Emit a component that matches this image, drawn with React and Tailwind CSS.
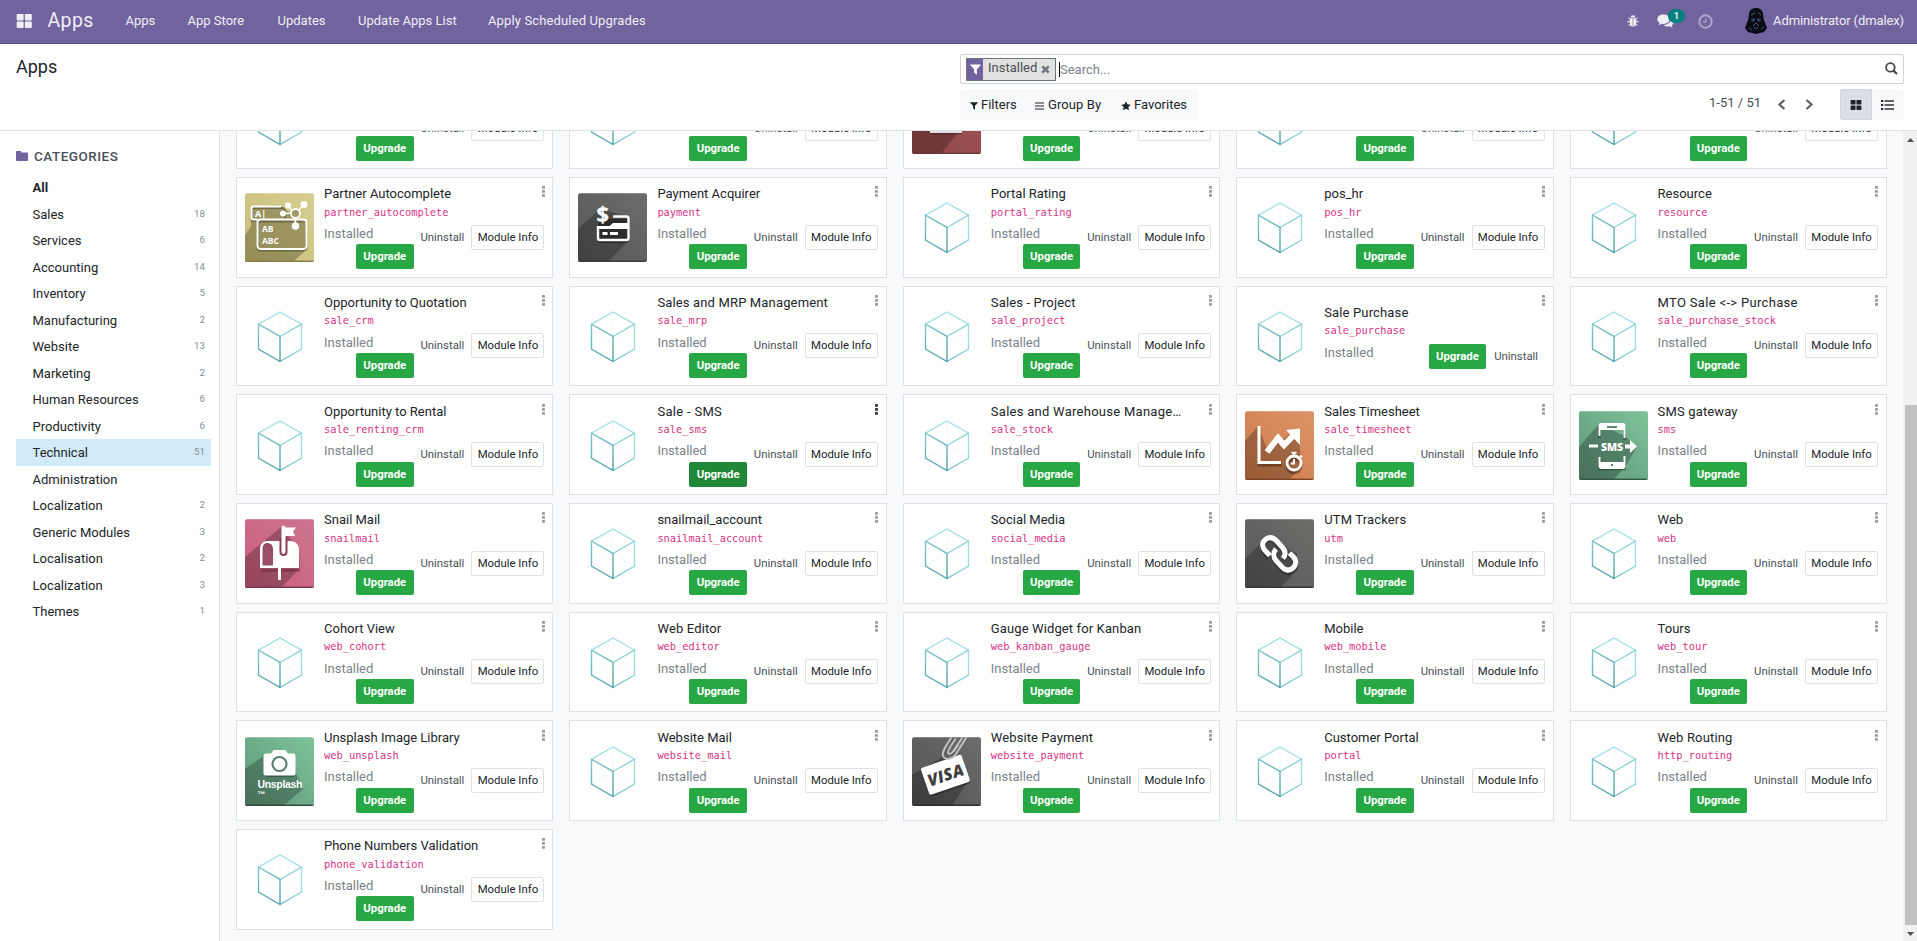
import React from "react";

const MODULES = [
  ["", ""],
  ["", ""],
  ["", "", "red"],
  ["", ""],
  ["", ""],
  ["Partner Autocomplete", "partner_autocomplete", "partner"],
  ["Payment Acquirer", "payment", "payment"],
  ["Portal Rating", "portal_rating"],
  ["pos_hr", "pos_hr"],
  ["Resource", "resource"],
  ["Opportunity to Quotation", "sale_crm"],
  ["Sales and MRP Management", "sale_mrp", "cube", "", "tracking-[0.15px]"],
  ["Sales - Project", "sale_project", "cube", "", "tracking-[0.15px]"],
  ["Sale Purchase", "sale_purchase", "cube", "compact", "tracking-[0.15px]"],
  ["MTO Sale <-> Purchase", "sale_purchase_stock", "cube", "", "tracking-[0.32px]"],
  ["Opportunity to Rental", "sale_renting_crm"],
  ["Sale - SMS", "sale_sms", "cube", "hovered", "tracking-[0.3px]"],
  ["Sales and Warehouse Manage…", "sale_stock", "cube", "", "tracking-[0.27px]"],
  ["Sales Timesheet", "sale_timesheet", "timesheet"],
  ["SMS gateway", "sms", "sms", "", "tracking-[0.15px]"],
  ["Snail Mail", "snailmail", "mail"],
  ["snailmail_account", "snailmail_account"],
  ["Social Media", "social_media"],
  ["UTM Trackers", "utm", "link", "", "tracking-[0.15px]"],
  ["Web", "web"],
  ["Cohort View", "web_cohort"],
  ["Web Editor", "web_editor", "cube", "", "tracking-[0.15px]"],
  ["Gauge Widget for Kanban", "web_kanban_gauge", "cube", "", "tracking-[0.12px]"],
  ["Mobile", "web_mobile"],
  ["Tours", "web_tour"],
  ["Unsplash Image Library", "web_unsplash", "unsplash"],
  ["Website Mail", "website_mail"],
  ["Website Payment", "website_payment", "visa", "", "tracking-[0.1px]"],
  ["Customer Portal", "portal"],
  ["Web Routing", "http_routing", "cube", "", "tracking-[0.15px]"],
  ["Phone Numbers Validation", "phone_validation"],
];

const CATEGORIES = [
  ["All", ""],
  ["Sales", "18"],
  ["Services", "6"],
  ["Accounting", "14"],
  ["Inventory", "5"],
  ["Manufacturing", "2"],
  ["Website", "13"],
  ["Marketing", "2"],
  ["Human Resources", "6"],
  ["Productivity", "6"],
  ["Technical", "51"],
  ["Administration", ""],
  ["Localization", "2"],
  ["Generic Modules", "3"],
  ["Localisation", "2"],
  ["Localization", "3"],
  ["Themes", "1"],
];

function Cube() {
  return (
    <svg className="size-[69px] shrink-0" viewBox="0 0 69 69" fill="none" strokeLinecap="round">
      <defs>
        <linearGradient id="cubeL" gradientUnits="userSpaceOnUse" x1="13" y1="20" x2="35" y2="60">
          <stop offset="0" stopColor="#84c9cc" />
          <stop offset="1" stopColor="#4b9fa4" />
        </linearGradient>
        <linearGradient id="cubeR" gradientUnits="userSpaceOnUse" x1="35" y1="60" x2="57" y2="12">
          <stop offset="0" stopColor="#6dbcc0" />
          <stop offset="0.5" stopColor="#a3e0e2" />
          <stop offset="1" stopColor="#a3e0e2" />
        </linearGradient>
      </defs>
      <path d="M35 10V34.5M13.5 47L35 34.5L56.5 47" stroke="#eef6f7" strokeWidth="0.8" />
      <path d="M35 59.5L56.5 47V22.2L35 10L13.5 22.2" stroke="url(#cubeR)" strokeWidth="1.4" />
      <path d="M35 34.5L56.5 22.2" stroke="#8fd3d6" strokeWidth="1.4" />
      <path d="M13.5 22.2V47L35 59.5M13.5 22.2L35 34.5V59.5" stroke="url(#cubeL)" strokeWidth="1.4" />
    </svg>
  );
}

function Tile({ id, from, to, edge, shadow, shade = "#000", children }) {
  return (
    <svg className="size-[69px] shrink-0" viewBox="0 0 69 69" fill="none">
      <defs>
        <linearGradient id={id} x1="0" y1="1" x2="1" y2="0">
          <stop offset="0" stopColor={from} />
          <stop offset="1" stopColor={to} />
        </linearGradient>
        <clipPath id={id + "c"}>
          <rect width="69" height="69" rx="2.5" />
        </clipPath>
      </defs>
      <g clipPath={`url(#${id}c)`}>
        <rect width="69" height="69" fill={`url(#${id})`} />
        <path d={shadow} fill={shade} opacity="0.25" />
        <rect width="69" height="1" fill="#fff" opacity="0.22" />
        <rect y="67.6" width="69" height="1.4" fill={edge} />
        {children}
      </g>
    </svg>
  );
}

function ModuleIcon({ kind }) {
  switch (kind) {
    case "red":
      return (
        <Tile id="red" from="#92494b" to="#a05254" edge="#6e3336" shadow="M0 40H52L29 69H0Z">
          <path d="M18 48.300H50" stroke="#3d2022" strokeWidth="2" opacity="0.6" />
          <path d="M18 47H50" stroke="#e4e2e0" strokeWidth="2" />
        </Tile>
      );
    case "partner":
      return (
        <Tile id="pa" from="#c9bd72" to="#d6cd93" edge="#857c46" shadow="M0 42L6 33V14L34 12L60 30L62 56L48 69H0Z">
          <g opacity="0.45" stroke="#3c381e" strokeWidth="2" transform="translate(0 1.6)">
            <rect x="6.500" y="13.500" width="33" height="13" rx="2" />
            <rect x="12.500" y="27" width="49" height="29" rx="3" />
          </g>
          <path d="M36 13.500H8.500A2 2 0 0 0 6.500 15.500V24.500A2 2 0 0 0 8.500 26.500H12.500M40 26.500H58.500A3 3 0 0 1 61.500 29.500V53A3 3 0 0 1 58.500 56H15.500A3 3 0 0 1 12.500 53V29.500A3 3 0 0 1 15.500 26.500H46" stroke="#fff" strokeWidth="2" />
          <path d="M50 20L43 13M50 20L59 12M50 20L38 20.500M50 20L50.500 32" stroke="#fff" strokeWidth="1.600" />
          <circle cx="50.500" cy="20.500" r="4.500" fill="#a39a60" stroke="#fff" strokeWidth="1.800" />
          <g fill="#fff">
            <circle cx="43" cy="12.500" r="3" />
            <circle cx="59" cy="11.500" r="3.500" />
            <circle cx="38" cy="20.500" r="3" />
            <circle cx="50.500" cy="33" r="3.800" />
          </g>
          <g fill="#fff" fontFamily="'Open Sans',sans-serif" fontWeight="700" fontSize="8.500">
            <text x="10" y="23.500" fontSize="9">A|</text>
            <text x="17" y="39">AB</text>
            <text x="17" y="51">ABC</text>
          </g>
        </Tile>
      );
    case "payment":
      return (
        <Tile id="py" from="#565655" to="#6c6e6b" edge="#3a3a3a" shadow="M0 36L22 16L52 24V46L30 69H0Z">
          <g opacity="0.4" transform="translate(0 2)">
            <rect x="20" y="24" width="31" height="24" rx="3" fill="#000" />
          </g>
          <text x="18.500" y="28.500" fill="#fff" stroke="#fff" strokeWidth="0.400" fontFamily="'Open Sans',sans-serif" fontWeight="700" fontSize="21.500">$</text>
          <path d="M35 23.500H48.500A2 2 0 0 1 50.500 25.500V45A2 2 0 0 1 48.500 47H22A2 2 0 0 1 20 45V33" stroke="#fff" strokeWidth="2.400" />
          <path d="M20 34.500H50V30H35L31 33.500L20 35Z" fill="#fff" />
          <path d="M20 34.500H50M24.500 40.500H29.500M32 40.500H40" stroke="#fff" strokeWidth="3.200" />
        </Tile>
      );
    case "timesheet":
      return (
        <Tile id="ts" from="#cd7a48" to="#dc9468" edge="#7c4527" shadow="M0 30L13 15L22 38L54 18L56 56L44 69H0Z">
          <g opacity="0.4" transform="translate(0 2)" stroke="#2c1608">
            <path d="M14 16V52H37" strokeWidth="3" />
            <circle cx="49" cy="53" r="7" strokeWidth="3" />
          </g>
          <path d="M14 15V51.500H36" stroke="#fff" strokeWidth="3.200" />
          <path d="M22 41L33 27L39 34L50 23" stroke="#fff" strokeWidth="6" strokeLinejoin="miter" />
          <path d="M41 19L55 17.500V34Z" fill="#fff" />
          <circle cx="49" cy="52" r="7" stroke="#fff" strokeWidth="2.800" />
          <path d="M49 48V52.500H46M46.500 41.800H51.500M49 42V45M55 44.500L57 46.500" stroke="#fff" strokeWidth="2" />
        </Tile>
      );
    case "sms":
      return (
        <Tile id="sm" from="#5f9678" to="#7dc39b" edge="#34553f" shadow="M0 36L20 13L46 25L58 36L46 56L34 69H0Z">
          <g opacity="0.4" transform="translate(0 2)" stroke="#10291b" strokeWidth="3">
            <path d="M20.500 25V15H45.500V27M20.500 46V56H45.500V46" />
          </g>
          <path d="M20.500 25V15A2 2 0 0 1 22.500 13H43.500A2 2 0 0 1 45.500 15V27M20.500 46V55A2 2 0 0 0 22.500 57H43.500A2 2 0 0 0 45.500 55V45" stroke="#fff" strokeWidth="2" />
          <path d="M20 13H46V19H20ZM20 51H46V57H20Z" fill="#fff" />
          <path d="M28 16H38M32 54H34" stroke="#5d8870" strokeWidth="1.800" />
          <path d="M10 35H19" stroke="#fff" strokeWidth="3" />
          <path d="M46 33.500H51V29L58 35.500L51 42V37.500H46Z" fill="#fff" />
          <text x="33" y="39.500" textAnchor="middle" fill="#fff" fontFamily="'Open Sans',sans-serif" fontWeight="800" fontSize="10.500" textLength="22">SMS</text>
        </Tile>
      );
    case "mail":
      return (
        <Tile id="ml" from="#cb5d7c" to="#cc7590" edge="#7d3149" shadow="M0 38L36 8L54 30L55 49L36 69H0Z">
          <path d="M16 51.500H55M38 8V36" stroke="#5c1930" strokeWidth="2" opacity="0.5" />
          <path d="M22 22H45C51 22 54 26 54 31V49H15V30C15 25 18 22 22 22Z" fill="#fff" />
          <path d="M17.500 46.500V30C17.500 26 19.500 24 22 24C25.500 24 28 26 28 30V46.500Z" fill="#9c4d69" />
          <path d="M34.500 49V61" stroke="#fff" strokeWidth="3" />
          <path d="M38.500 22V33" stroke="#8d3d59" strokeWidth="8" strokeLinecap="round" />
          <path d="M38.500 8.500V33" stroke="#fff" strokeWidth="4" strokeLinecap="round" />
          <path d="M38 8.500H51L48 12.500L50 17H38Z" fill="#fff" />
        </Tile>
      );
    case "link":
      return (
        <Tile id="lk" from="#5a5a5a" to="#6b6d68" edge="#333" shadow="M0 40L20 20L52 34L53 50L35 69H0Z">
          <g strokeWidth="5" strokeLinecap="butt" fill="none">
            <g stroke="#222" opacity="0.45" transform="translate(0 2)">
              <path d="M24 37L20 32.500C16.500 28 17 23.500 20.500 20.800C24 18 28 18.500 31.500 22L38 29C41 32.500 41 36.500 38.500 39" />
              <path d="M44.500 34.500L48.500 38.500C52 42.500 51 46.500 48 49.500C44.500 52.500 40.500 52 37 48.500L31 41.500C28 38 28 33.500 31 30.500" />
            </g>
            <g stroke="#fff">
              <path d="M25 36.500L20 31.500C16.500 27.500 17 23 20.500 20.500C24 17.800 28 18.200 31.500 21.800L37.500 28.500C40.500 32 40.800 36 38 39.500" />
              <path d="M44.500 34L48.500 38C52 42 51 46.500 48 49C44.500 52 40.500 51.500 37 48L31 41.500C28 38 28 33.500 31 30" />
            </g>
          </g>
        </Tile>
      );
    case "unsplash":
      return (
        <Tile id="un" from="#5f9678" to="#7dc39b" edge="#2d4a39" shadow="M0 32L20 18L51 36L58 52L38 69H0Z">
          <path d="M21 39H49" stroke="#24392d" strokeWidth="2" opacity="0.5" />
          <path d="M20.500 16.500H26L28.500 13H40.500L43 16.500H48A2.500 2.500 0 0 1 50.500 19V36A2.500 2.500 0 0 1 48 38.500H21A2.500 2.500 0 0 1 18.500 36V19A2.500 2.500 0 0 1 20.500 16.500Z" fill="#fff" />
          <circle cx="34.500" cy="27" r="7" stroke="#5d8270" strokeWidth="2.200" />
          <g fill="#fff" fontFamily="'Liberation Sans',sans-serif" fontWeight="700">
            <text x="12.500" y="51" fontSize="10.500" textLength="45">Unsplash</text>
            <text x="12.500" y="60" fontSize="8">™</text>
          </g>
        </Tile>
      );
    case "visa":
      return (
        <Tile id="vi" from="#515151" to="#6c6e6b" edge="#2b2b2b" shadow="M0 38L30 20L56 44L40 69H0Z">
          <g transform="translate(33.500 38) rotate(-19)">
            <rect x="-21.500" y="-12.500" width="43" height="28.500" rx="2" fill="#222" opacity="0.5" />
            <rect x="-21.500" y="-14.500" width="43" height="28.500" rx="2" fill="#fff" />
            <text x="0" y="6" textAnchor="middle" fontFamily="'Open Sans',sans-serif" fontStyle="italic" fontWeight="800" fontSize="16.500" textLength="37" fill="#3f3f3f">VISA</text>
          </g>
          <path d="M54 1L44 17C41 22 33 24 31 19C29.500 15 34 9 39 1M50 1L42 13C40 17 36.500 18 36 15.500C36 13 40 7 43.500 2M46 8L42 14" stroke="#c4c4c4" strokeWidth="1.800" strokeLinecap="round" />
        </Tile>
      );
    default:
      return <Cube />;
  }
}

function Upgrade({ dark }) {
  return (
    <button
      className={
        "h-[25px] w-[57.500px] shrink-0 rounded-[2px] text-[11.375px] font-bold text-white " +
        (dark ? "bg-[#1f8838]" : "bg-[#28a745]")
      }
    >
      Upgrade
    </button>
  );
}

function ModuleCard({ title, name, icon, variant, tracking = "" }) {
  const compact = variant === "compact";
  return (
    <article className="flex overflow-hidden border border-[#dee2e6] bg-white pl-2">
      <div className="flex items-start pt-[15.400px]">
        <ModuleIcon kind={icon} />
      </div>
      <div className={"ml-2.5 flex min-w-0 flex-1 flex-col " + (compact ? "pt-[16px]" : "pt-[6px]")}>
        <div className="flex h-5 items-center text-[13px] text-[#212529]">
          <span className={"whitespace-nowrap " + tracking}>{title}</span>
        </div>
        <div className="flex h-4 items-center pt-px font-['DejaVu_Sans_Mono',monospace] text-[10.350px] text-[#d63384]">
          <span className="whitespace-nowrap">{name}</span>
        </div>
        {compact ? (
          <div className="mt-1 flex">
            <span className="h-[20px] flex-1 text-[13px] leading-[20px] text-[#7c838a]">Installed</span>
            <div className="mt-px mr-[14.500px] flex items-center gap-2 self-start">
              <Upgrade />
              <span className="text-[11.375px] text-[#495057]">Uninstall</span>
            </div>
          </div>
        ) : (
          <div className="mt-1 flex">
            <div className="flex flex-col">
              <span className="h-[20.300px] text-[13px] leading-[19px] text-[#7c838a]">Installed</span>
              <div className="ml-8 flex">
                <Upgrade dark={variant === "hovered"} />
              </div>
            </div>
            <div className="mt-[0.600px] mr-2 ml-auto flex h-[25px] items-center gap-[7px]">
              <span className="text-[11.375px] text-[#495057]">Uninstall</span>
              <button className="h-[25px] w-[73px] rounded-[2px] border border-[#dee2e6] text-[11.375px] whitespace-nowrap text-[#212529]">
                Module Info
              </button>
            </div>
          </div>
        )}
      </div>
      <div className="relative w-0">
        <svg className="absolute top-[8.300px] right-[7.500px] h-[11px] w-[3px]" viewBox="0 0 3 11" fill={variant === "hovered" ? "#343a40" : "#9a9ea3"}>
          <rect width="3" height="2.700" rx="0.500" />
          <rect y="4" width="3" height="2.700" rx="0.500" />
          <rect y="8" width="3" height="2.700" rx="0.500" />
        </svg>
      </div>
    </article>
  );
}

function GridIcon({ className }) {
  return (
    <svg className={className} viewBox="0 0 13 12" fill="currentColor">
      <rect width="6" height="5.500" rx="0.800" />
      <rect x="7" width="6" height="5.500" rx="0.800" />
      <rect y="6.500" width="6" height="5.500" rx="0.800" />
      <rect x="7" y="6.500" width="6" height="5.500" rx="0.800" />
    </svg>
  );
}

function FunnelIcon({ className }) {
  return (
    <svg className={className} viewBox="0 0 12 12" fill="currentColor">
      <path d="M0.300 0.500H11.700L11.800 1.200L7.500 5.600V11.600L4.500 9.300V5.600L0.200 1.200Z" />
    </svg>
  );
}

function Navbar() {
  return (
    <header className="flex h-11 shrink-0 items-center border-b border-[#5c4f84] bg-[#71639e] pb-px pl-4 text-[#f0eef5]">
      <GridIcon className="h-[14px] w-[16.500px]" />
      <span className="ml-[15px] w-[78px] text-[19.500px] tracking-[0.4px]">Apps</span>
      <nav className="flex text-[13px] whitespace-nowrap">
        <span className="w-[62px]">Apps</span>
        <span className="w-[90px]">App Store</span>
        <span className="w-[80.500px]">Updates</span>
        <span className="w-[130px]">Update Apps List</span>
        <span className="tracking-[0.14px]">Apply Scheduled Upgrades</span>
      </nav>
      <div className="mr-[13px] ml-auto flex items-center text-[13px]">
        <svg className="h-[12px] w-[12px]" viewBox="0 0 12 12" fill="currentColor">
          <path d="M3.600 2.600A2.400 2.400 0 0 1 8.400 2.600Z" />
          <path d="M2.800 3.200H5.700V11.700C4.200 11.600 2.800 10.400 2.800 8ZM6.300 3.200H9.200V8C9.200 10.400 7.800 11.600 6.300 11.700Z" />
          <path d="M3 4.300L1.200 2.600M9 4.300L10.800 2.600M3 6.700H0.200M9 6.700H11.800M3.200 9L1.400 10.900M8.800 9L10.600 10.900" stroke="currentColor" strokeWidth="1" />
        </svg>
        <div className="relative ml-[18px]">
          <svg className="h-[14px] w-[17px]" viewBox="0 0 17 14" fill="currentColor">
            <path d="M6.500 0.500C10 0.500 12.500 2.600 12.500 5.200S10 9.900 6.500 9.900C5.900 9.900 5.300 9.800 4.700 9.700C3.700 10.400 2.500 10.800 1.200 11C2 10.300 2.400 9.600 2.500 8.800C1.100 7.900 0.300 6.600 0.300 5.200C0.300 2.600 3 0.500 6.500 0.500Z" />
            <path d="M13.500 4C15.500 4.800 16.700 6.200 16.700 7.900C16.700 9.300 15.900 10.500 14.600 11.400C14.700 12.200 15.200 12.900 15.900 13.500C14.600 13.400 13.400 13 12.400 12.300C10.200 12.700 8 12.200 6.700 10.900C10.800 10.900 14.500 8 13.500 4Z" />
          </svg>
          <span className="absolute -top-[5px] left-[11px] flex h-[14px] w-[17px] items-center justify-center rounded-full bg-[#00807f] text-[9.500px] font-bold">
            1
          </span>
        </div>
        <svg className="ml-[23.500px] size-[15px] text-[#b1a8cb]" viewBox="0 0 15 15" fill="none" stroke="currentColor">
          <circle cx="7.500" cy="7.500" r="6.200" strokeWidth="1.900" />
          <path d="M7.800 4V8.200H5" strokeWidth="1.200" />
        </svg>
        <svg className="ml-[32px] h-[26px] w-[22px]" viewBox="0 0 22 26">
          <path d="M11 0C15 0 17.500 2 18 6L19 12L22 20L19 24L11 26L3 24L0 20L3 12L4 6C4.500 2 7 0 11 0Z" fill="#0a0c14" />
          <path d="M6 11L10 10V13L7 14ZM16 11L12 10V13L15 14Z" fill="#30405c" />
          <path d="M8 18L11 15L14 18M9 20H13M6 7L10 5M13 4L16 7M4 20L7 22M16 21L19 19" stroke="#52647e" strokeWidth="0.900" fill="none" />
        </svg>
        <span className="ml-[6.500px] tracking-[-0.110px] whitespace-nowrap">Administrator (dmalex)</span>
      </div>
    </header>
  );
}

function ControlPanel() {
  return (
    <section className="flex h-[87px] shrink-0 justify-between border-b border-[#dee2e6] bg-white pr-[13px] pl-4">
      <h1 className="pt-[9px] text-[18px] leading-[27px] text-[#212529]">Apps</h1>
      <div className="w-[944px] pt-[10px]">
        <div className="flex h-[30px] items-center rounded-[2px] border border-[#ced4da] pl-[5px]">
          <div className="flex h-[23px] w-[90px] items-center border border-[#6c757d] bg-[#e2e2e0]">
            <div className="flex h-full w-4 items-center justify-center bg-[#71639e] text-white">
              <FunnelIcon className="size-[11px]" />
            </div>
            <span className="ml-[5px] pb-[2px] text-[13px] text-[#495057]">Installed</span>
            <svg className="ml-[4px] size-[9px]" viewBox="0 0 9 9">
              <path d="M1.300 1.300L7.700 7.700M7.700 1.300L1.300 7.700" stroke="#6c757d" strokeWidth="2.600" />
            </svg>
          </div>
          <span className="ml-[3px] h-[15px] w-px bg-black" />
          <span className="flex-1 pt-px text-[13px] text-[#7c838a]">Search...</span>
          <svg className="mr-[5px] mb-[2px] size-[13px]" viewBox="0 0 13 13" fill="none" stroke="#41474d">
            <circle cx="5.400" cy="5.400" r="4.300" strokeWidth="1.800" />
            <path d="M8.600 8.600L12 12" strokeWidth="2.200" />
          </svg>
        </div>
        <div className="mt-[5px] flex h-[31px] items-center text-[13px] text-[#212529]">
          <div className="flex h-full w-[238px] items-center rounded-[2px] bg-[#f8f9fa] pl-[10px] whitespace-nowrap">
            <FunnelIcon className="mt-0.5 size-[8px]" />
            <span className="ml-[3px] w-[54px]">Filters</span>
            <svg className="mt-0.5 h-[8px] w-[9px]" viewBox="0 0 9 8" stroke="currentColor">
              <path d="M0 1H9M0 4H9M0 7H9" strokeWidth="1.100" />
            </svg>
            <span className="ml-1 w-[73px] tracking-[0.1px]">Group By</span>
            <svg className="mt-0.5 size-[10px]" viewBox="0 0 10 10" fill="currentColor">
              <path d="M5 0.300L6.400 3.300L9.800 3.700L7.300 6L8 9.300L5 7.700L2 9.300L2.700 6L0.200 3.700L3.600 3.300Z" />
            </svg>
            <span className="ml-[3px]">Favorites</span>
          </div>
          <span className="ml-auto pb-[3px] text-[#495057]">1-51 / 51</span>
          <svg className="ml-[16px] h-[11px] w-[9px]" viewBox="0 0 9 11" fill="none" stroke="#5c6269">
            <path d="M7.500 1L2.500 5.500L7.500 10" strokeWidth="2.200" />
          </svg>
          <svg className="ml-[19px] h-[11px] w-[9px]" viewBox="0 0 9 11" fill="none" stroke="#5c6269">
            <path d="M1.500 1L6.500 5.500L1.500 10" strokeWidth="2.200" />
          </svg>
          <div className="ml-[26px] flex h-full">
            <div className="flex w-8 items-center justify-center rounded-l-[2px] border border-[#d0d6de] bg-[#dadfe6]">
              <GridIcon className="h-[10px] w-[12px]" />
            </div>
            <div className="flex w-8 items-center justify-center rounded-r-[2px] bg-[#f8f9fa] pr-px">
              <svg className="h-[10px] w-[13px]" viewBox="0 0 13 10" fill="currentColor">
                <rect width="2.200" height="2" />
                <rect y="4" width="2.200" height="2" />
                <rect y="8" width="2.200" height="2" />
                <rect x="3.500" y="0.300" width="9.500" height="1.400" />
                <rect x="3.500" y="4.300" width="9.500" height="1.400" />
                <rect x="3.500" y="8.300" width="9.500" height="1.400" />
              </svg>
            </div>
          </div>
        </div>
      </div>
    </section>
  );
}

function Sidebar() {
  return (
    <aside className="w-[220px] shrink-0 border-r border-[#dee2e6] bg-white pt-[15px] pr-2 pl-4 text-[13px]">
      <div className="flex h-5 items-center text-[#495057]">
        <svg className="h-[10px] w-[12px]" viewBox="0 0 12 10" fill="#71639e">
          <path d="M1 0H4.300A1 1 0 0 1 5.300 1V1.500H11A1 1 0 0 1 12 2.500V9A1 1 0 0 1 11 10H1A1 1 0 0 1 0 9V1A1 1 0 0 1 1 0Z" />
        </svg>
        <span className="ml-[6px] pt-px text-[13.500px] font-medium tracking-[0.5px]">CATEGORIES</span>
      </div>
      <ul className="mt-2">
        {CATEGORIES.map(([label, count], i) => (
          <li
            key={i}
            className={
              "flex h-[26.500px] items-center justify-between pt-px pr-[6px] pl-[16.500px] text-[#212529] " +
              (label === "Technical" ? "bg-[#d2ebf9]" : "")
            }
          >
            <span className={label === "All" ? "font-bold" : ""}>{label}</span>
            <span className="text-[9.750px] text-[#868e96]">{count}</span>
          </li>
        ))}
      </ul>
    </aside>
  );
}

function Scrollbar() {
  return (
    <div className="flex w-[14px] shrink-0 flex-col items-center bg-[#f1f1f1] pl-px">
      <svg className="mt-[7px] h-[4px] w-[7px]" viewBox="0 0 7 4" fill="#505050">
        <path d="M0 4L3.500 0L7 4Z" />
      </svg>
      <div className="mt-[263px] h-[520px] w-[12px] bg-[#c1c1c1]" />
      <svg className="mt-[7px] h-[4px] w-[7px]" viewBox="0 0 7 4" fill="#505050">
        <path d="M0 0L3.500 4L7 0Z" />
      </svg>
    </div>
  );
}

export default function App() {
  return (
    <div className="flex h-[941px] w-[1917px] flex-col overflow-hidden bg-white font-[Roboto,sans-serif]">
      <Navbar />
      <ControlPanel />
      <div className="flex min-h-0 flex-1">
        <Sidebar />
        <main className="min-w-0 flex-1 overflow-hidden bg-[#f8f9fa] px-4">
          <div className="-mt-[62.670px] grid auto-rows-[100.670px] grid-cols-5 gap-x-4 gap-y-2">
            {MODULES.map(([title, name, icon, variant, tracking], i) => (
              <ModuleCard key={i} title={title} name={name} icon={icon} variant={variant} tracking={tracking} />
            ))}
          </div>
        </main>
        <Scrollbar />
      </div>
    </div>
  );
}
